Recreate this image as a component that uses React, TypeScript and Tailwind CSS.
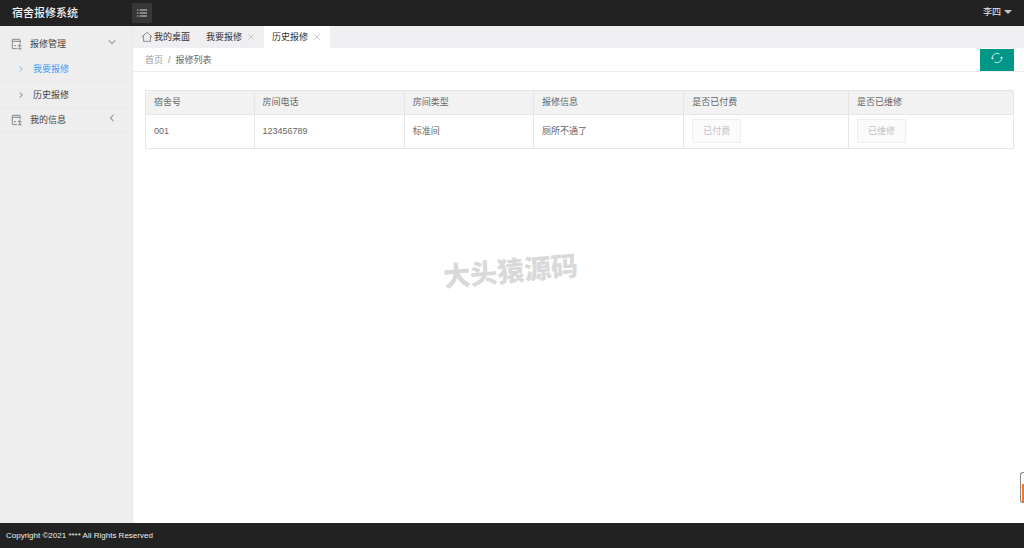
import { useState, type ReactNode } from 'react';
import { clsx } from 'clsx';

interface Repair {
  room: string;
  phone: string;
  type: string;
  info: string;
  paid: boolean;
  repaired: boolean;
}

const repairs: Repair[] = [
  { room: '001', phone: '123456789', type: '标准间', info: '厕所不通了', paid: true, repaired: true },
];

const columns = [
  { title: '宿舍号', width: 'w-[12.5%]' },
  { title: '房间电话', width: 'w-[17.3%]' },
  { title: '房间类型', width: 'w-[14.9%]' },
  { title: '报修信息', width: 'w-[17.3%]' },
  { title: '是否已付费', width: 'w-[19%]' },
  { title: '是否已维修', width: 'w-[19%]' },
];

function FormIcon() {
  return (
    <svg viewBox="0 0 12 12" className="h-3 w-3 shrink-0" fill="none" stroke="#7a7a7a" strokeWidth="0.9">
      <path d="M6 10.6H1.9a.6.6 0 0 1-.6-.6V1.9c0-.3.3-.6.6-.6h6.7c.3 0 .6.3.6.6v3.3" />
      <path d="M1.3 3.3h7.9M3 7.7h2" />
      <path d="M8.7 10.8V7M6.7 8.2l2-1.8 2 1.8M7 10.8h3.6" />
    </svg>
  );
}

function HomeIcon() {
  return (
    <svg viewBox="0 0 12 12" className="h-3 w-3 shrink-0" fill="none" stroke="#707070" strokeWidth="0.8" strokeLinejoin="round">
      <path d="M2.6 5.7H1.1L6 1.3l4.9 4.4H9.4v4.6H2.6z" />
    </svg>
  );
}

function Chevron({ className }: { className?: string }) {
  return (
    <svg viewBox="0 0 8 8" className={clsx('shrink-0', className)} fill="none" stroke="currentColor" strokeWidth="0.9">
      <path d="M2.3 0.8 5.7 4 2.3 7.2" />
    </svg>
  );
}

function MenuIcon() {
  return (
    <svg viewBox="0 0 12 12" className="h-3 w-3" fill="none" stroke="#d2d2d2" strokeWidth="1">
      <path d="M3.5 3h7.5M3.5 6h7.5M3.5 9h7.5M1 3h1.3M1 6h1.3M1 9h1.3" />
    </svg>
  );
}

function RefreshIcon() {
  return (
    <svg viewBox="0 0 12 12" className="h-3 w-3" fill="none" stroke="#fff" strokeWidth="0.8">
      <path d="M1.3 6.9A4.7 4.7 0 0 1 8.4 2M10.7 5.1A4.7 4.7 0 0 1 3.6 10" />
      <path d="M.3 5.7l1 1.4 1.5-1M11.7 6.3l-1-1.4-1.5 1" />
    </svg>
  );
}

function MenuGroup({ title, open, onToggle, children }: {
  title: string;
  open: boolean;
  onToggle: () => void;
  children?: ReactNode;
}) {
  return (
    <li>
      <button
        type="button"
        onClick={onToggle}
        className={clsx(
          'flex h-[25px] w-full items-center gap-[7px] pr-4 pl-[11px] text-left text-[#444]',
          !open && 'border-b border-[#e8e8e8]',
        )}
      >
        <FormIcon />
        <span className="flex-1">{title}</span>
        <Chevron className={clsx('mb-1 h-2 w-2 text-[#666]', open ? 'rotate-90' : 'rotate-180')} />
      </button>
      {open && <ul>{children}</ul>}
    </li>
  );
}

function MenuItem({ title, active }: { title: string; active?: boolean }) {
  return (
    <li className="border-b border-[#e8e8e8]">
      <a
        href="#"
        className={clsx('flex h-[25px] items-center gap-[9px] pl-[18px]', active ? 'text-[#3d9bff]' : 'text-[#444]')}
      >
        <Chevron className="h-[6px] w-[6px]" />
        {title}
      </a>
    </li>
  );
}

function StateButton({ children }: { children: ReactNode }) {
  return (
    <button
      type="button"
      disabled
      className="block h-6 w-[49px] rounded-[1px] border border-[#eee] bg-[#fbfbfb] text-[#c4c4c4]"
    >
      {children}
    </button>
  );
}

export default function App() {
  const [repairOpen, setRepairOpen] = useState(true);
  const [infoOpen, setInfoOpen] = useState(false);
  const [tabs, setTabs] = useState(['我要报修', '历史报修']);
  const [current, setCurrent] = useState('历史报修');

  return (
    <div className="relative flex min-h-screen flex-col overflow-hidden bg-white font-['Liberation_Sans','Noto_Sans_CJK_SC',sans-serif] text-[9px] leading-3 text-[#666]">
      {/* Header */}
      <header className="flex h-[26px] items-center bg-[#222] text-white">
        <h1 className="w-33 pl-3 text-[11px] font-medium text-[#f2f2f2]">宿舍报修系统</h1>
        <button type="button" aria-label="菜单" className="flex h-5 w-5 items-center justify-center rounded-[1px] bg-[#373737]">
          <MenuIcon />
        </button>
        <button type="button" className="mr-3 ml-auto flex items-center gap-[3px] pb-[2px] text-[#e4e4e4]">
          李四
          <span className="border-x-4 border-t-4 border-x-transparent border-t-[#c8c8c8]" />
        </button>
      </header>

      <div className="flex flex-1">
        {/* Sidebar */}
        <nav className="w-[133px] shrink-0 border-r border-[#e6e6e6] bg-[#eee] pt-[5px]">
          <ul>
            <MenuGroup title="报修管理" open={repairOpen} onToggle={() => setRepairOpen(!repairOpen)}>
              <MenuItem title="我要报修" active />
              <MenuItem title="历史报修" />
            </MenuGroup>
            <MenuGroup title="我的信息" open={infoOpen} onToggle={() => setInfoOpen(!infoOpen)} />
          </ul>
        </nav>

        <main className="min-w-0 flex-1">
          {/* Tabs */}
          <div className="flex h-[22px] bg-[#efeef0] text-[#333]">
            <button type="button" className="flex items-center gap-px px-2">
              <HomeIcon />
              我的桌面
            </button>
            {tabs.map((tab) => (
              <div key={tab} className={clsx('flex items-center gap-[6px] pr-[10px] pl-2', tab === current && 'bg-white')}>
                <button type="button" onClick={() => setCurrent(tab)}>{tab}</button>
                <button type="button" aria-label={`关闭${tab}`} onClick={() => setTabs(tabs.filter((t) => t !== tab))}>
                  <svg viewBox="0 0 6 6" className="h-[6px] w-[6px]" fill="none" stroke="#bbb" strokeWidth="0.8">
                    <path d="M.3.3l5.4 5.4M5.7.3.3 5.7" />
                  </svg>
                </button>
              </div>
            ))}
          </div>

          {/* Breadcrumb */}
          <div className="flex h-6 items-center border-b border-[#eee] pr-[10px] pl-3">
            <a href="#" className="text-[#999]">首页</a>
            <span className="px-[5px] text-[#888]">/</span>
            <span>报修列表</span>
            <button
              type="button"
              aria-label="刷新"
              className="ml-auto flex h-[22px] w-[34px] justify-center bg-[#009688] pt-[3px]"
            >
              <RefreshIcon />
            </button>
          </div>

          {/* Repair list */}
          <div className="pt-[18px] pr-[10px] pl-3">
            <table className="w-full table-fixed border-collapse text-left [&_td]:border [&_td]:border-[#e6e6e6] [&_td]:px-2 [&_td]:pb-px [&_th]:border [&_th]:border-[#e6e6e6] [&_th]:px-2 [&_th]:pb-px">
              <thead>
                <tr className="h-6 bg-[#f2f2f2]">
                  {columns.map((col) => (
                    <th key={col.title} className={clsx('font-normal', col.width)}>{col.title}</th>
                  ))}
                </tr>
              </thead>
              <tbody>
                {repairs.map((row) => (
                  <tr key={row.room} className="h-[34px]">
                    <td>{row.room}</td>
                    <td>{row.phone}</td>
                    <td>{row.type}</td>
                    <td>{row.info}</td>
                    <td><StateButton>{row.paid ? '已付费' : '未付费'}</StateButton></td>
                    <td><StateButton>{row.repaired ? '已维修' : '未维修'}</StateButton></td>
                  </tr>
                ))}
              </tbody>
            </table>
          </div>
        </main>
      </div>

      <footer className="flex h-[25px] items-center bg-[#222] px-[6px] text-[8px] text-[#eee]">
        Copyright ©2021 **** All Rights Reserved
      </footer>

      {/* Watermark */}
      <div className="pointer-events-none absolute inset-0 flex items-center justify-center pr-1 pb-2">
        <span className="-rotate-5 font-['Noto_Sans_CJK_SC',sans-serif] text-[27px] leading-8 font-black text-[#d9d9d9]">
          大头猿源码
        </span>
      </div>

      {/* Side widget */}
      <div className="absolute right-0 bottom-[45px] flex h-[31px] w-1 items-end rounded-l-[3px] border border-r-0 border-[#888] bg-white pl-px">
        <span className="h-[18px] w-full bg-[#ff7423]" />
      </div>
    </div>
  );
}
